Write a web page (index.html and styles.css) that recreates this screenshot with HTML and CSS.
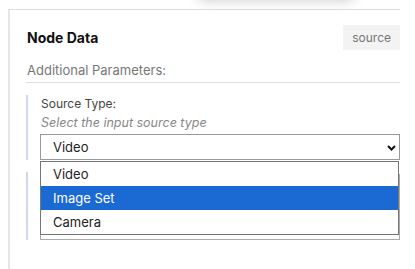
FILE: index.html
```html
<!DOCTYPE html>
<html lang="en">
<head>
    <meta charset="UTF-8">
    <title>Node Data</title>
    <link rel="stylesheet" href="styles.css">
</head>
<body>
    <div class="toolbar-shadow"></div>

    <div class="panel">
        <div class="panel-header">
            <h3>Node Data</h3>
            <span class="badge">source</span>
        </div>
        <div class="section-title">Additional Parameters:</div>

        <div class="param">
            <label class="param-label" for="sourceType">Source Type:</label>
            <div class="param-desc">Select the input source type</div>
            <div class="select-wrap">
                <select id="sourceType" class="param-select">
                    <option>Video</option>
                    <option>Image Set</option>
                    <option>Camera</option>
                </select>
                <svg class="chevron" width="9" height="6" viewBox="0 0 9 6">
                    <path d="M1 1 L4.5 4.5 L8 1" fill="none" stroke="#111" stroke-width="2"/>
                </svg>
            </div>

            <ul class="dropdown">
                <li>Video</li>
                <li class="active">Image Set</li>
                <li>Camera</li>
            </ul>
        </div>

        <div class="param param-under">
            <textarea class="param-input"></textarea>
        </div>
    </div>
</body>
</html>
```

FILE: styles.css
```css
html, body {
    margin: 0;
    padding: 0;
    height: 100%;
    overflow: hidden;
}

body {
    font-family: "Inter", "Open Sans", sans-serif;
    background-color: #ffffff;
    color: #222;
    position: relative;
}

.toolbar-shadow {
    position: absolute;
    top: -40px;
    left: 197px;
    width: 158px;
    height: 40px;
    background: #ffffff;
    box-shadow: 0 1px 12px rgba(0, 0, 0, 0.18);
    border-radius: 8px;
}

.panel {
    margin: 9px 15px 0 8px;
    border-top: 1px solid #dedede;
    border-left: 2px solid #e6e6e6;
    padding: 15px 0 0 16px;
    height: 100%;
    box-sizing: border-box;
}

.panel-header {
    display: flex;
    justify-content: space-between;
    align-items: center;
    height: 25px;
}

    .panel-header h3 {
        margin: 0;
        font-size: 14px;
        font-weight: 700;
        color: #111;
        padding-left: 1px;
    }

.badge {
    background-color: #f3f3f3;
    color: #777;
    font-size: 12px;
    height: 25px;
    line-height: 25px;
    padding: 0 9px;
}

.section-title {
    margin-top: 10px;
    line-height: 20px;
    font-size: 13px;
    color: #777;
    padding: 0 0 2px 1px;
    border-bottom: 1px solid #dedede;
}

.param {
    position: relative;
    margin-top: 12px;
    border-left: 2px solid #cfd8ea;
    padding-left: 12px;
}

    .param + .param {
        margin-top: 12px;
    }

.param-label {
    display: block;
    font-size: 12px;
    line-height: 16px;
    color: #444;
    padding: 1px 0 0 1px;
}

.param-desc {
    font-size: 12.5px;
    font-style: italic;
    line-height: 17px;
    color: #888;
    margin-top: 2px;
    padding-left: 1px;
}

.select-wrap {
    position: relative;
    margin-top: 3px;
}

.param-select {
    display: block;
    width: 100%;
    height: 26px;
    margin: 0;
    padding: 0 0 0 12px;
    border: 1px solid #999;
    border-radius: 0;
    background: #ffffff;
    font-family: inherit;
    font-size: 13px;
    color: #222;
    -webkit-appearance: none;
    appearance: none;
    box-sizing: border-box;
}

.chevron {
    position: absolute;
    right: 4px;
    top: 11px;
}

.param-under {
    height: 68px;
    display: flex;
    align-items: flex-end;
}

.param-input {
    display: block;
    width: 100%;
    height: 66px;
    margin: 0;
    padding: 0;
    border: 1px solid #aaa;
    resize: none;
    box-sizing: border-box;
}

.dropdown {
    position: absolute;
    top: 100%;
    left: 12px;
    right: 1px;
    margin: 1px 0 0 0;
    padding: 0;
    list-style: none;
    background: #ffffff;
    border: 1px solid #767676;
    z-index: 5;
}

    .dropdown li {
        height: 24px;
        line-height: 24px;
        padding-left: 12px;
        font-size: 13px;
        color: #222;
    }

        .dropdown li.active {
            background-color: #1b69d3;
            color: #ffffff;
        }
```
